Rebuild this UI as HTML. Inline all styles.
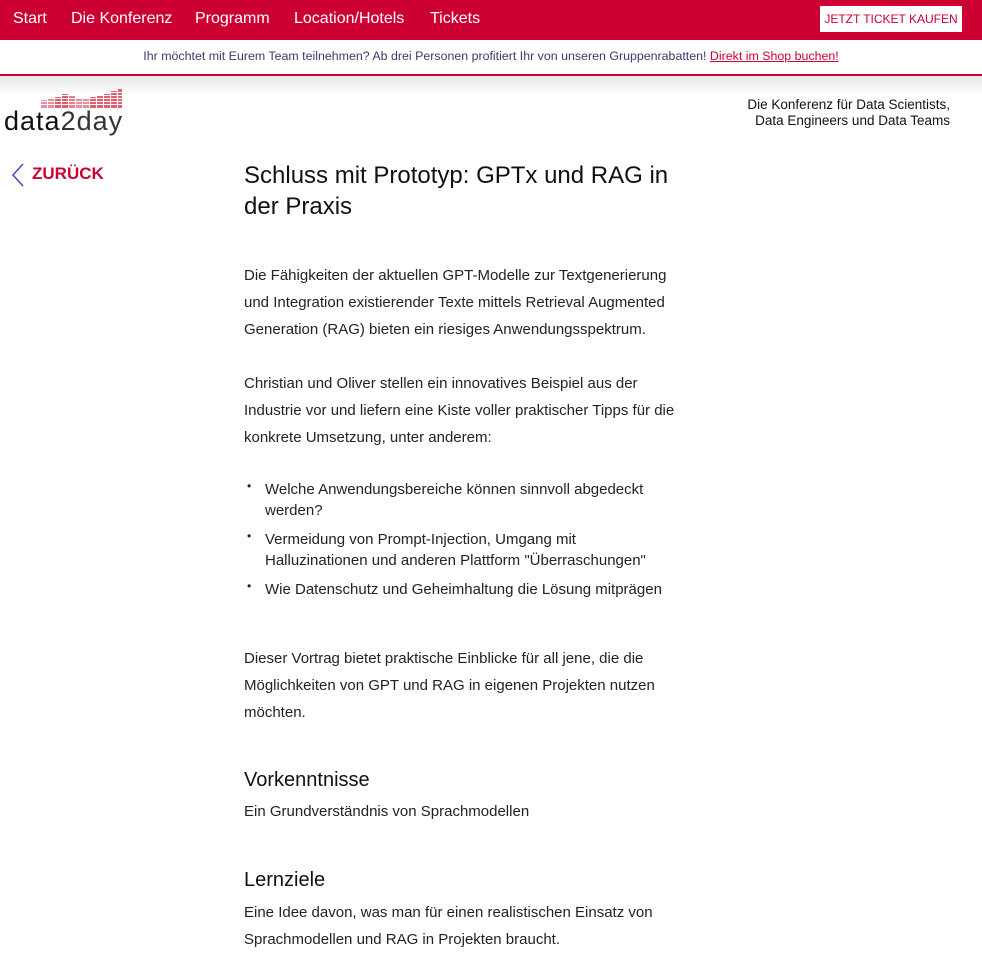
<!DOCTYPE html>
<html><head><meta charset="utf-8"><style>
*{margin:0;padding:0;box-sizing:border-box}
body{width:982px;height:957px;overflow:hidden;background:#fff;font-family:"Liberation Sans",sans-serif;color:#222}
.nav{height:40px;background:#cc0033;position:relative}
.nav a{position:absolute;top:10px;color:#fff;font-size:16px;text-decoration:none}
.btn{position:absolute;left:820px;top:6px;width:142px;height:26px;background:#fff;color:#cc0033;font-size:12px;text-align:center;line-height:26px}
.banner{height:36px;border-bottom:2px solid #cc0033;text-align:center;font-size:12.4px;color:#3a3a6a;line-height:32px}
.banner u{color:#cc0033}
.shadow{height:20px;background:linear-gradient(#e8e8e8,#fff)}
.tag{position:absolute;right:32px;top:97px;text-align:right;font-size:13.5px;line-height:16px;color:#111}
.logo{position:absolute;left:5px;top:88px}
.logotext{position:absolute;left:4px;top:106px;font-size:27px;color:#111;letter-spacing:1px}
.back{position:absolute;left:12px;top:163px;color:#cc0033;font-weight:bold;font-size:17px}
.back span{margin-left:8px}
.c{position:absolute;left:244px;top:160px;width:450px}
h1{font-weight:normal;font-size:24px;line-height:31px;color:#111}
p{font-size:15px;line-height:27px}
ul{list-style:none;font-size:15px;line-height:21px;width:430px}
li{position:relative;padding-left:21px;margin-bottom:8px}
li:before{content:"•";position:absolute;left:3px;top:-3px;font-size:12px}
h2{font-weight:normal;font-size:20px;color:#111}
</style></head><body>
<div class="nav">
<a style="left:13px">Start</a><a style="left:71px">Die Konferenz</a><a style="left:195px">Programm</a><a style="left:294px">Location/Hotels</a><a style="left:430px">Tickets</a>
<div class="btn">JETZT TICKET KAUFEN</div>
</div>
<div class="banner">Ihr möchtet mit Eurem Team teilnehmen? Ab drei Personen profitiert Ihr von unseren Gruppenrabatten! <u>Direkt im Shop buchen!</u></div>
<div class="shadow"></div>
<svg class="logo" width="120" height="22" viewBox="0 0 120 22">
<g fill="#e06070">
<rect x="36" y="12" width="6" height="8" opacity=".7"/><rect x="43" y="10" width="6" height="10" opacity=".7"/><rect x="50" y="9" width="6" height="11"/><rect x="57" y="6" width="6" height="14"/><rect x="64" y="8" width="6" height="12" opacity=".8"/><rect x="71" y="10" width="6" height="10" opacity=".7"/><rect x="78" y="11" width="6" height="9" opacity=".7"/><rect x="85" y="9" width="6" height="11"/><rect x="92" y="7" width="6" height="13"/><rect x="99" y="6" width="6" height="14"/><rect x="106" y="3" width="6" height="17"/><rect x="113" y="1" width="4" height="19"/>
</g>
<g fill="#fff"><rect y="13" width="120" height="1"/><rect y="16" width="120" height="1"/><rect y="10" width="120" height="1"/><rect y="7" width="120" height="1"/><rect y="4" width="120" height="1"/></g>
</svg>
<div class="logotext">data<span style="color:#333">2day</span></div>
<div class="tag">Die Konferenz für Data Scientists,<br>Data Engineers und Data Teams</div>
<div class="back"><svg width="12" height="24" viewBox="0 0 12 24" style="vertical-align:middle"><path d="M11 1 L1 12 L11 23" stroke="#5a40c0" stroke-width="1.5" fill="none"/></svg><span>ZURÜCK</span></div>
<div class="c">
<h1>Schluss mit Prototyp: GPTx und RAG in der Praxis</h1>
<p style="margin-top:40px">Die Fähigkeiten der aktuellen GPT-Modelle zur Textgenerierung und Integration existierender Texte mittels Retrieval Augmented Generation (RAG) bieten ein riesiges Anwendungsspektrum.</p>
<p style="margin-top:27px">Christian und Oliver stellen ein innovatives Beispiel aus der Industrie vor und liefern eine Kiste voller praktischer Tipps für die konkrete Umsetzung, unter anderem:</p>
<ul style="margin-top:28px">
<li>Welche Anwendungsbereiche können sinnvoll abgedeckt werden?</li>
<li>Vermeidung von Prompt-Injection, Umgang mit Halluzinationen und anderen Plattform "Überraschungen"</li>
<li>Wie Datenschutz und Geheimhaltung die Lösung mitprägen</li>
</ul>
<p style="margin-top:45px">Dieser Vortrag bietet praktische Einblicke für all jene, die die Möglichkeiten von GPT und RAG in eigenen Projekten nutzen möchten.</p>
<h2 style="margin-top:43px">Vorkenntnisse</h2>
<p style="margin-top:6px">Ein Grundverständnis von Sprachmodellen</p>
<h2 style="margin-top:44px">Lernziele</h2>
<p style="margin-top:7px">Eine Idee davon, was man für einen realistischen Einsatz von Sprachmodellen und RAG in Projekten braucht.</p>
</div>
</body></html>
